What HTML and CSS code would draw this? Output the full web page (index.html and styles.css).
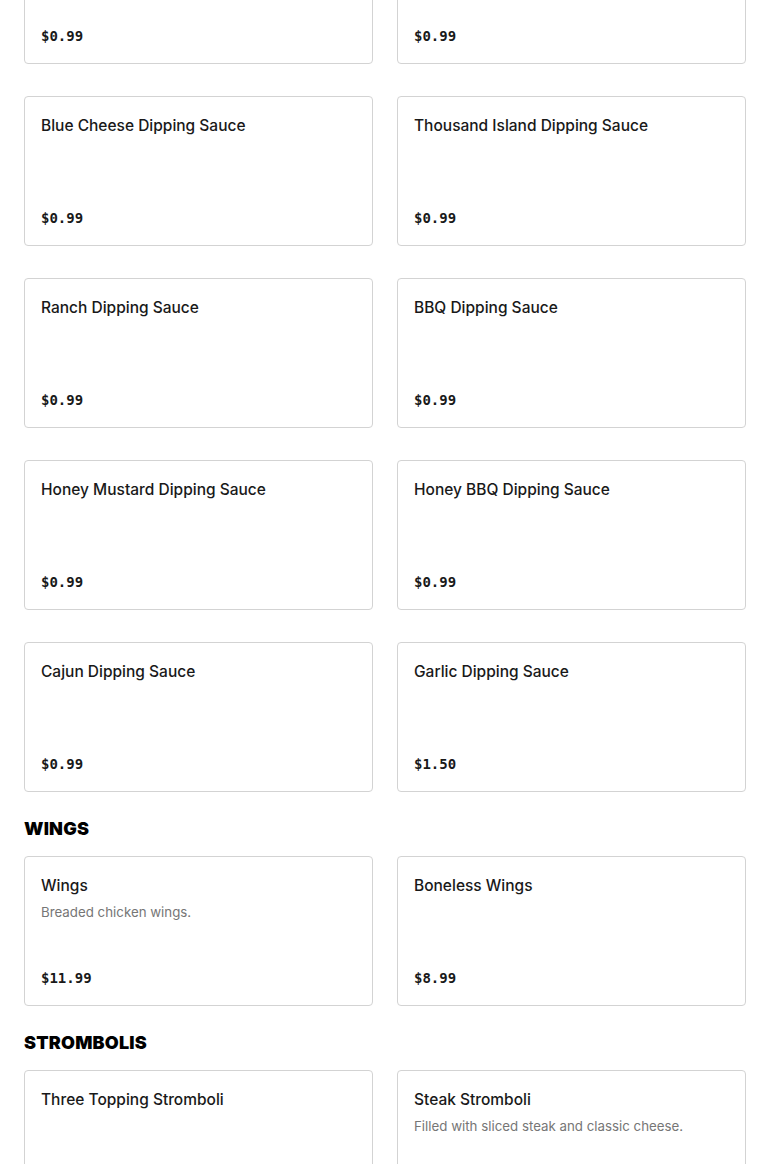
FILE: index.html
```html
<!DOCTYPE html>
<html>
<head>
<meta charset="utf-8">
<link rel="stylesheet" href="styles.css">
</head>
<body>
<main class="menu">
  <div class="grid">
    <div class="card"><div class="name">Sauce</div><div class="price">$0.99</div></div>
    <div class="card"><div class="name">Sauce</div><div class="price">$0.99</div></div>
    <div class="card"><div class="name">Blue Cheese Dipping Sauce</div><div class="price">$0.99</div></div>
    <div class="card"><div class="name">Thousand Island Dipping Sauce</div><div class="price">$0.99</div></div>
    <div class="card"><div class="name">Ranch Dipping Sauce</div><div class="price">$0.99</div></div>
    <div class="card"><div class="name">BBQ Dipping Sauce</div><div class="price">$0.99</div></div>
    <div class="card"><div class="name">Honey Mustard Dipping Sauce</div><div class="price">$0.99</div></div>
    <div class="card"><div class="name">Honey BBQ Dipping Sauce</div><div class="price">$0.99</div></div>
    <div class="card"><div class="name">Cajun Dipping Sauce</div><div class="price">$0.99</div></div>
    <div class="card"><div class="name">Garlic Dipping Sauce</div><div class="price">$1.50</div></div>
  </div>
  <h2 class="section">WINGS</h2>
  <div class="grid">
    <div class="card"><div class="name">Wings</div><div class="desc">Breaded chicken wings.</div><div class="price">$11.99</div></div>
    <div class="card"><div class="name">Boneless Wings</div><div class="price">$8.99</div></div>
  </div>
  <h2 class="section">STROMBOLIS</h2>
  <div class="grid">
    <div class="card"><div class="name">Three Topping Stromboli</div><div class="price">$12.99</div></div>
    <div class="card"><div class="name">Steak Stromboli</div><div class="desc">Filled with sliced steak and classic cheese.</div><div class="price">$13.99</div></div>
  </div>
</main>
</body>
</html>
```
FILE: styles.css
```css
html, body {
  margin: 0;
  padding: 0;
  background: #ffffff;
}
body {
  font-family: "Inter", "Liberation Sans", sans-serif;
  color: #191919;
}
.menu {
  padding: 0 24px 40px;
  margin-top: -86px;
}
.grid {
  display: grid;
  grid-template-columns: 1fr 1fr;
  column-gap: 24px;
  row-gap: 32px;
}
.card {
  box-sizing: border-box;
  height: 150px;
  border: 1px solid #d3d3d3;
  border-radius: 4px;
  padding: 17px 16px 15px 16px;
  display: flex;
  flex-direction: column;
}
.name {
  font-size: 15.5px;
  font-weight: 500;
  line-height: 24px;
  color: #191919;
}
.desc {
  margin-top: 4px;
  font-size: 13.3px;
  line-height: 20px;
  color: #767676;
}
.price {
  margin-top: auto;
  font-family: "DejaVu Sans Mono", "Liberation Mono", monospace;
  font-weight: bold;
  font-size: 14px;
  line-height: 24px;
  color: #191919;
}
.section {
  margin: 25px 0 15px;
  font-family: "Inter", "Liberation Sans", sans-serif;
  font-weight: 900;
  font-size: 18px;
  line-height: 24px;
  color: #000;
  letter-spacing: 0.2px;
}
```
